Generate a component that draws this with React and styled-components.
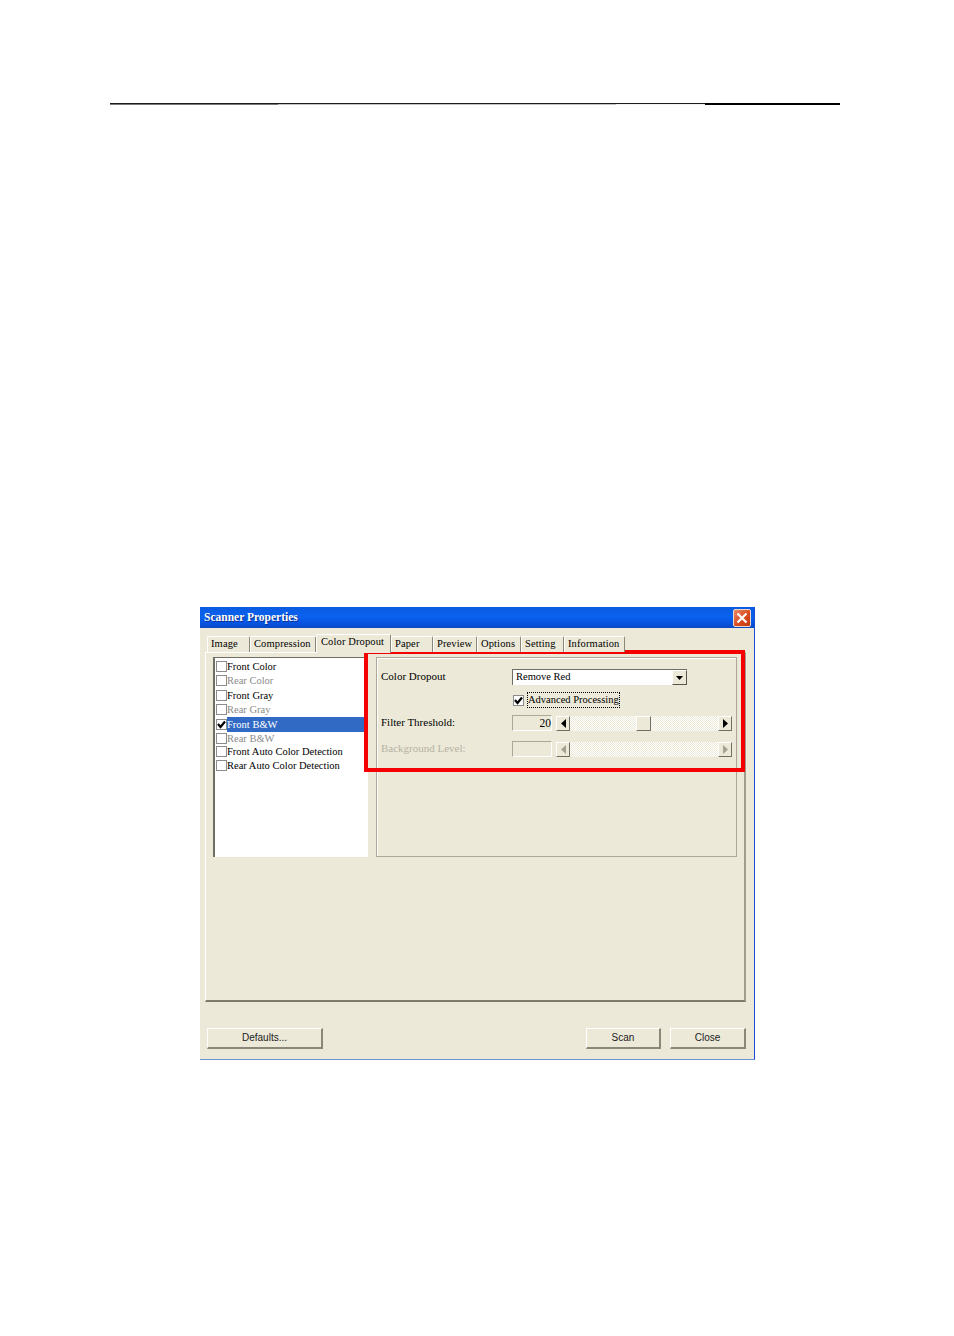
import React from "react";
import styled, { createGlobalStyle } from "styled-components";

const GlobalStyle = createGlobalStyle`
  html, body {
    margin: 0;
    padding: 0;
    background: #fff;
  }
  body {
    font-family: "Liberation Sans", Arial, sans-serif;
    font-size: 11px;
    color: #000;
  }
`;

const TABS = [
  { label: "Image", width: 43 },
  { label: "Compression", width: 66 },
  { label: "Color Dropout", width: 75, active: true },
  { label: "Paper", width: 42 },
  { label: "Preview", width: 44 },
  { label: "Options", width: 44 },
  { label: "Setting", width: 43 },
  { label: "Information", width: 61 },
];

const ITEMS = [
  { label: "Front Color", height: 14.5 },
  { label: "Rear Color", disabled: true, height: 14.5 },
  { label: "Front Gray", height: 14.5 },
  { label: "Rear Gray", disabled: true, height: 14.5 },
  { label: "Front B&W", checked: true, selected: true, height: 14.5 },
  { label: "Rear B&W", disabled: true, height: 13.5 },
  { label: "Front Auto Color Detection", height: 13.5 },
  { label: "Rear Auto Color Detection", height: 14 },
];

const Tick = ({ size = 9 }) => (
  <svg width={size} height={size} viewBox="0 0 9 9">
    <path d="M1 4 L3.5 7 L8 1.5" fill="none" stroke="#000" strokeWidth="2.2" />
  </svg>
);

const Arrow = ({ dir, color = "#000" }) => (
  <svg width="5" height="9" viewBox="0 0 5 9">
    <path d={dir === "left" ? "M5 0 L0 4.5 L5 9 Z" : "M0 0 L5 4.5 L0 9 Z"} fill={color} />
  </svg>
);

const Slider = ({ disabled, thumbAt }) => {
  const color = disabled ? "#a5a294" : "#000";
  return (
    <ScrollBar>
      <ArrowButton>
        <Arrow dir="left" color={color} />
      </ArrowButton>
      <Track>{thumbAt != null && <Thumb style={{ left: thumbAt }} />}</Track>
      <ArrowButton>
        <Arrow dir="right" color={color} />
      </ArrowButton>
    </ScrollBar>
  );
};

export default function App() {
  return (
    <Page>
      <GlobalStyle />
      <Rule />
      <Dialog>
        <TitleBar>
          <Title>Scanner Properties</Title>
          <CloseBox>
            <svg width="12" height="12" viewBox="0 0 12 12">
              <path d="M1.5 1.5 L10.5 10.5 M10.5 1.5 L1.5 10.5" stroke="#fff" strokeWidth="2.2" />
            </svg>
          </CloseBox>
        </TitleBar>
        <TabStrip>
          {TABS.map((tab) => (
            <Tab key={tab.label} $active={tab.active} $width={tab.width}>
              {tab.label}
            </Tab>
          ))}
        </TabStrip>
        <TabPanel>
          <ListBox>
            {ITEMS.map((item) => (
              <ListRow key={item.label} $height={item.height}>
                <CheckBox>{item.checked && <Tick />}</CheckBox>
                <RowLabel $selected={item.selected} $disabled={item.disabled}>
                  {item.label}
                </RowLabel>
              </ListRow>
            ))}
          </ListBox>
          <GroupBox>
            <Highlight />
            <FieldRow $top={11}>
              <FieldLabel>Color Dropout</FieldLabel>
              <Select>
                <SelectText>Remove Red</SelectText>
                <SelectButton>
                  <svg width="7" height="4" viewBox="0 0 7 4">
                    <path d="M0 0 H7 L3.5 4 Z" fill="#000" />
                  </svg>
                </SelectButton>
              </Select>
            </FieldRow>
            <FieldRow $top={7}>
              <span />
              <CheckField>
                <CheckBox $boxed>
                  <Tick />
                </CheckBox>
                <FocusLabel>Advanced Processing</FocusLabel>
              </CheckField>
            </FieldRow>
            <FieldRow $top={7}>
              <FieldLabel>Filter Threshold:</FieldLabel>
              <SliderField>
                <ValueBox>20</ValueBox>
                <Slider thumbAt={66} />
              </SliderField>
            </FieldRow>
            <FieldRow $top={10}>
              <FieldLabel $disabled>Background Level:</FieldLabel>
              <SliderField>
                <ValueBox />
                <Slider disabled />
              </SliderField>
            </FieldRow>
          </GroupBox>
        </TabPanel>
        <ButtonBar>
          <PushButton $width={116}>Defaults...</PushButton>
          <Spacer />
          <PushButton $width={75}>Scan</PushButton>
          <PushButton $width={76}>Close</PushButton>
        </ButtonBar>
      </Dialog>
    </Page>
  );
}

const Page = styled.div`
  width: 954px;
  height: 1336px;
  padding-top: 103px;
  box-sizing: border-box;
  overflow: hidden;
`;

/* the rule is a scan: its two pixel rows change shade along the way */
const Rule = styled.div`
  width: 730px;
  height: 2px;
  margin-left: 110px;
  background-repeat: no-repeat;
  background-size: 100% 1px;
  background-position: 0 0, 0 1px;
  background-image:
    linear-gradient(90deg, #1c1c1c 595px, #000 595px),
    linear-gradient(
      90deg,
      #777 168px,
      #c4c4c4 168px,
      #c4c4c4 506px,
      #f2f2f2 506px,
      #f2f2f2 595px,
      #000 595px
    );
`;

const Dialog = styled.div`
  box-sizing: border-box;
  width: 555px;
  height: 453px;
  margin: 502px 0 0 200px;
  display: flex;
  flex-direction: column;
  background: #ece9d8;
  border-right: 1px solid #1c4fd0;
  border-bottom: 1px solid #6c93d8;
`;

const TitleBar = styled.div`
  height: 21px;
  flex: none;
  display: flex;
  align-items: center;
  justify-content: space-between;
  padding: 0 3px 2px 4px;
  box-sizing: border-box;
  background: linear-gradient(#0a5ae0 0%, #0a62ee 45%, #0654e2 75%, #0a49c4 100%);
`;

const Title = styled.span`
  font-family: "Liberation Serif", serif;
  font-size: 11.5px;
  font-weight: 700;
  color: #fff;
  text-shadow: 1px 1px 0 #0a2f90;
`;

const CloseBox = styled.div`
  box-sizing: border-box;
  width: 18px;
  height: 18px;
  margin-top: 2px;
  display: flex;
  align-items: center;
  justify-content: center;
  border: 1px solid #f0d8c8;
  border-radius: 2px;
  background: linear-gradient(135deg, #ea8a68, #d8481c 60%, #c23a10);
`;

const TabStrip = styled.div`
  height: 24px;
  flex: none;
  display: flex;
  align-items: flex-end;
  padding-left: 7px;
  position: relative;
  z-index: 1;
`;

const Tab = styled.div`
  box-sizing: border-box;
  width: ${(p) => p.$width}px;
  height: ${(p) => (p.$active ? 19 : 16)}px;
  margin-bottom: ${(p) => (p.$active ? -1 : 0)}px;
  padding-left: ${(p) => (p.$active ? 4 : 3)}px;
  font-family: "Liberation Serif", serif;
  font-size: 10.5px;
  line-height: 13px;
  letter-spacing: 0.12px;
  white-space: nowrap;
  background: #ece9d8;
  border-top: 1px solid #fff;
  border-left: 1px solid #fff;
  border-right: 1px solid #8a8778;
  border-radius: 2px 2px 0 0;
`;

const TabPanel = styled.div`
  box-sizing: border-box;
  width: 541px;
  height: 350px;
  margin-left: 5px;
  flex: none;
  display: flex;
  align-items: flex-start;
  gap: 8px;
  padding: 4px 8px 0 7px;
  border-top: 1px solid #fff;
  border-left: 1px solid #fff;
  border-right: 2px solid #a09d8d;
  border-bottom: 2px solid #7d7a6c;
`;

const ListBox = styled.div`
  box-sizing: border-box;
  width: 155px;
  height: 200px;
  flex: none;
  padding: 1px 0 0 1px;
  background: #fff;
  border-top: 1px solid #716f64;
  border-left: 2px solid #716f64;
`;

const ListRow = styled.div`
  height: ${(p) => p.$height}px;
  display: flex;
  align-items: center;
`;

const RowLabel = styled.span`
  flex: 1;
  align-self: stretch;
  display: flex;
  align-items: center;
  font-family: "Liberation Serif", serif;
  font-size: 10.5px;
  white-space: nowrap;
  color: ${(p) => (p.$selected ? "#fff" : p.$disabled ? "#8a8a8a" : "#000")};
  background: ${(p) => (p.$selected ? "#316ac5" : "transparent")};
`;

const CheckBox = styled.div`
  box-sizing: border-box;
  width: 11px;
  height: 11px;
  margin-right: ${(p) => (p.$boxed ? 4 : 0)}px;
  flex: none;
  display: flex;
  align-items: center;
  justify-content: center;
  background: #fff;
  border: 1px solid #8c8c8c;
`;

const GroupBox = styled.div`
  box-sizing: border-box;
  position: relative;
  width: 361px;
  height: 200px;
  padding: 0 4px;
  border: 1px solid #aca899;
  box-shadow: inset 1px 1px 0 #fff;
`;

const Highlight = styled.div`
  position: absolute;
  top: -8px;
  left: -13px;
  width: 381px;
  height: 122px;
  box-sizing: border-box;
  border: 4px solid #f40000;
  pointer-events: none;
`;

const FieldRow = styled.div`
  display: grid;
  grid-template-columns: 131px 1fr;
  align-items: center;
  height: 16px;
  margin-top: ${(p) => p.$top}px;
`;

const FieldLabel = styled.span`
  margin-top: -2px;
  font-family: "Liberation Serif", serif;
  font-size: 11px;
  white-space: nowrap;
  color: ${(p) => (p.$disabled ? "#b5b2a4" : "#000")};
`;

const Select = styled.div`
  box-sizing: border-box;
  width: 175px;
  height: 16px;
  display: flex;
  align-items: center;
  justify-content: space-between;
  background: #fff;
  border-top: 1px solid #716f64;
  border-left: 1px solid #716f64;
`;

const SelectText = styled.span`
  margin-top: -2px;
  padding-left: 3px;
  font-family: "Liberation Serif", serif;
  font-size: 10.5px;
`;

const SelectButton = styled.div`
  box-sizing: border-box;
  width: 15px;
  height: 15px;
  display: flex;
  align-items: center;
  justify-content: center;
  background: #ece9d8;
  border-top: 1px solid #fff;
  border-left: 1px solid #fff;
  border-right: 1px solid #55534a;
  border-bottom: 1px solid #55534a;
`;

const CheckField = styled.div`
  display: flex;
  align-items: center;
  padding-left: 1px;
`;

const FocusLabel = styled.span`
  padding: 0 0 1px 0;
  font-family: "Liberation Serif", serif;
  font-size: 10.5px;
  line-height: 13px;
  outline: 1px dotted #000;
`;

const SliderField = styled.div`
  display: flex;
  align-items: center;
  gap: 4px;
`;

const ValueBox = styled.div`
  box-sizing: border-box;
  width: 40px;
  height: 16px;
  padding-right: 0;
  text-align: right;
  font-family: "Liberation Serif", serif;
  font-size: 11.5px;
  line-height: 14px;
  border-top: 1px solid #aca899;
  border-left: 1px solid #aca899;
  border-right: 1px solid #fff;
  border-bottom: 1px solid #fff;
`;

const ScrollBar = styled.div`
  width: 176px;
  height: 15px;
  display: flex;
`;

const ArrowButton = styled.div`
  box-sizing: border-box;
  width: 14px;
  height: 15px;
  flex: none;
  display: flex;
  align-items: center;
  justify-content: center;
  background: #ece9d8;
  border-top: 1px solid #fff;
  border-left: 1px solid #fff;
  border-right: 1px solid #716f64;
  border-bottom: 1px solid #716f64;
`;

const Track = styled.div`
  flex: 1;
  position: relative;
  background-color: #ece9d8;
  background-image: repeating-conic-gradient(#fff 0 25%, #ece9d8 0 50%);
  background-size: 2px 2px;
`;

const Thumb = styled(ArrowButton)`
  position: absolute;
  top: 0;
  width: 15px;
`;

const ButtonBar = styled.div`
  display: flex;
  align-items: flex-start;
  gap: 9px;
  padding: 26px 8px 0 7px;
`;

const Spacer = styled.div`
  flex: 1;
`;

const PushButton = styled.div`
  box-sizing: border-box;
  width: ${(p) => p.$width}px;
  height: 21px;
  text-align: center;
  font-size: 10px;
  line-height: 17px;
  color: #222;
  background: #ece9d8;
  border-top: 1px solid #fff;
  border-left: 1px solid #fff;
  border-right: 2px solid #8a8778;
  border-bottom: 2px solid #8a8778;
`;
